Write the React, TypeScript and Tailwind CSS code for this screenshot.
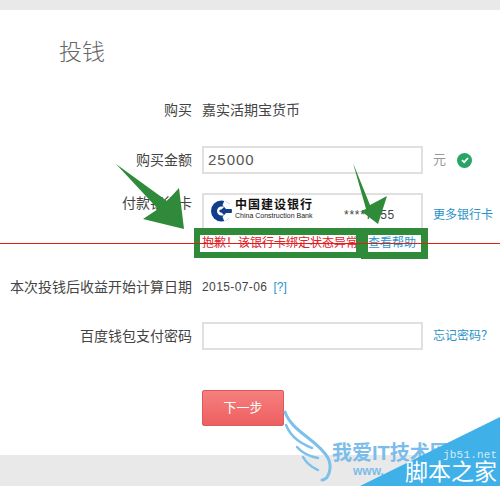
import React from "react";

function Row({ label, children, className = "" }: { label: string; children: React.ReactNode; className?: string }) {
  return (
    <div className={`flex items-center ${className}`}>
      <div className="w-[192px] shrink-0 text-right text-[14px] leading-[20px] text-[#444]">{label}</div>
      <div className="ml-[10px] flex flex-1 items-center">{children}</div>
    </div>
  );
}

function CcbLogo() {
  return (
    <svg width="23" height="24" viewBox="0 0 22 24" className="shrink-0">
      <circle cx="11" cy="12" r="10.5" fill="#0f3f8c" />
      <path d="M14 1.5 L22 7 L22 10 L15.5 10 L12 6 Z" fill="#fff" />
      <path d="M14 22.5 L22 17 L22 14 L15.5 14 L12 18 Z" fill="#fff" />
      <path d="M11 7.5 A4.5 4.5 0 1 0 11 16.5 L14 16.5 L11 13.5 A1.6 1.6 0 1 1 11 10.5 L14 7.5 Z" fill="#fff" />
    </svg>
  );
}

export default function App() {
  return (
    <div
      className="relative flex h-[486px] w-[500px] flex-col overflow-hidden bg-white"
      style={{ fontFamily: '"Liberation Sans", "Noto Sans CJK SC", sans-serif' }}
    >
      <div className="h-[10px] shrink-0 bg-[#e9e9e9]" />
      <main className="flex-1">
        <h1 className="ml-[59px] mt-[27px] text-[23px] font-light leading-[30px] text-[#666]">投钱</h1>

        <Row label="购买" className="mt-[33px]">
          <span className="text-[14px] leading-[20px] text-[#444]">嘉实活期宝货币</span>
        </Row>

        <Row label="购买金额" className="mt-[26px]">
          <div className="flex h-[28px] w-[221px] items-center border-2 border-[#e0e0e0] px-[4px] text-[15px] tracking-[1px] text-[#555]">
            25000
          </div>
          <span className="ml-[10px] text-[13px] text-[#999]">元</span>
          <span className="ml-[11px] flex h-[15px] w-[15px] items-center justify-center rounded-full bg-[#27a567]">
            <svg width="10" height="10" viewBox="0 0 10 10">
              <path d="M2 5.2 L4.2 7.2 L8 3" fill="none" stroke="#fff" strokeWidth="1.8" />
            </svg>
          </span>
        </Row>

        <Row label="付款银行卡" className="mt-[19px] items-start">
          <div className="flex h-[35px] w-[221px] items-start border-2 border-b-0 border-[#e0e0e0] pl-[6px] pt-[4px]">
            <CcbLogo />
            <div className="ml-[2px] flex flex-col">
              <span className="text-[12px] font-bold leading-[13px] tracking-[1px] text-[#111]">中国建设银行</span>
              <span className="text-[7px] leading-[8px] text-[#222]">China Construction Bank</span>
            </div>
            <span className="ml-[31px] mt-[7px] text-[12px] tracking-[0.7px] text-[#444]">****7655</span>
          </div>
          <span className="ml-[10px] mt-[9px] text-[12px] leading-[16px] text-[#2a93c8]">更多银行卡</span>
        </Row>

        <div className="ml-[202px] mt-[7px] flex h-[17px] items-center text-[12px] leading-[17px]">
          <span className="text-[#e0202c]">抱歉！该银行卡绑定状态异常</span>
          <span className="ml-[10px] text-[#2a93c8]">查看帮助</span>
        </div>

        <Row label="本次投钱后收益开始计算日期" className="mt-[25px]">
          <span className="text-[12px] tracking-[0.4px] text-[#444]">2015-07-06</span>
          <span className="ml-[6px] text-[12px] text-[#2a93c8]">[?]</span>
        </Row>

        <Row label="百度钱包支付密码" className="mt-[25px]">
          <div className="h-[28px] w-[221px] border-2 border-[#e0e0e0]" />
          <span className="ml-[10px] text-[12px] text-[#2a93c8]">忘记密码？</span>
        </Row>

        <button className="ml-[202px] mt-[40px] flex h-[36px] w-[82px] items-center justify-center rounded-[2px] border border-[#d85a5a] bg-gradient-to-b from-[#f77f7f] to-[#ec5f5f] text-[13px] text-white">
          下一步
        </button>
      </main>
      <div className="h-[31px] shrink-0 bg-[#e9e9e9]" />

      {/* annotations */}
      <div className="absolute left-[194px] top-[228px] h-[30px] w-[168px] border-x-[6px] border-t-[7px] border-b-[6px] border-[#2f8a3a]" />
      <div className="absolute left-[361px] top-[228px] h-[31px] w-[67px] border-[7px] border-[#2f8a3a]" />
      <div className="absolute left-0 top-[243px] h-px w-[500px] bg-[#e01f14]" />
      <svg className="pointer-events-none absolute left-0 top-0" width="500" height="486" viewBox="0 0 500 486">
        <polygon points="116,164 167,201 179,188 184,229 143,219 158,209" fill="#2f8a3a" />
        <polygon points="353,163 370,205 387,196 378,224 361,211 366,209" fill="#2f8a3a" />
        <g fill="none" stroke="#7cc0ec" strokeLinecap="round">
          <path d="M285 412 C292 432 318 440 328 458 C333 468 328 480 322 480" strokeWidth="3" />
          <path d="M286 425 C292 440 305 445 312 448" strokeWidth="2.5" />
          <path d="M297 447 C304 455 312 457 318 458" strokeWidth="2.5" />
          <path d="M303 457 C308 466 314 468 318 470" strokeWidth="2.5" />
        </g>
      </svg>
      <div className="absolute left-[332px] top-[441px] text-[20px] font-bold leading-[24px] text-[#7cbcea]">我爱IT技术网</div>
      <div className="absolute left-[353px] top-[465px] text-[12px] font-bold leading-[12px] text-[#7cbcea]">www.</div>
      <svg className="absolute left-0 top-0" width="500" height="486" viewBox="0 0 500 486">
        <polygon points="500,417 360,486 500,486" fill="#3fb0e8" />
      </svg>
      <div className="absolute left-[443px] top-[447px] text-[11px] leading-[16px] tracking-[0.2px] text-[#d5ecf8]" style={{ fontFamily: '"Liberation Mono", monospace' }}>jb51.net</div>
      <div className="absolute left-[405px] top-[460px] text-[23px] leading-[25px] text-white">脚本之家</div>
    </div>
  );
}
